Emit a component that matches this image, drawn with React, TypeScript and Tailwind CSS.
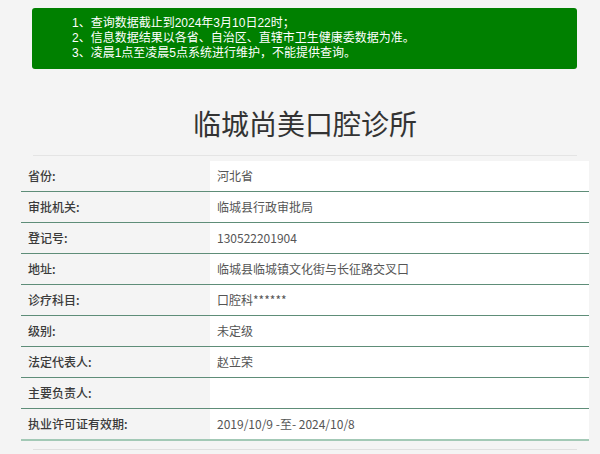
const notices = [
  "1、查询数据截止到2024年3月10日22时；",
  "2、信息数据结果以各省、自治区、直辖市卫生健康委数据为准。",
  "3、凌晨1点至凌晨5点系统进行维护，不能提供查询。",
];

const rows: [string, string][] = [
  ["省份:", "河北省"],
  ["审批机关:", "临城县行政审批局"],
  ["登记号:", "130522201904"],
  ["地址:", "临城县临城镇文化街与长征路交叉口"],
  ["诊疗科目:", "口腔科******"],
  ["级别:", "未定级"],
  ["法定代表人:", "赵立荣"],
  ["主要负责人:", ""],
  ["执业许可证有效期:", "2019/10/9 -至- 2024/10/8"],
];

export default function App() {
  return (
    <div className="h-[454px] overflow-hidden bg-[#f4f4f4] pt-2 font-['Noto_Sans_CJK_SC','Noto_Sans',sans-serif]">
      {/* notice box */}
      <div className="ml-[32px] h-[61px] w-[545px] rounded-[3px] bg-[#008000] pl-[40px] pt-[8px] font-['Liberation_Sans','Noto_Sans_CJK_SC',sans-serif] text-[12px] leading-[15px] text-white">
        {notices.map((n) => (
          <p key={n}>{n}</p>
        ))}
      </div>

      <div className="ml-[33px] mt-[34px] w-[544px] border-b border-[#e4e4e4] pb-[12px] text-center text-[28px] leading-[40px] text-[#333]">
        临城尚美口腔诊所
      </div>

      <div className="ml-[21px] mt-[5px] w-[568px]">
        {rows.map(([label, value], i) => (
          <div
            key={label}
            className={
              i === rows.length - 1
                ? "flex h-[32px] border-b-2 border-[#a3c9b6] text-[12px]"
                : "flex h-[31px] border-b border-[#5e8d78] text-[12px]"
            }
          >
            <div className="flex w-[189px] items-center bg-[#f4f4f4] pl-[7px] font-medium text-[#3a3a3a]">
              {label}
            </div>
            <div className="flex flex-1 items-center bg-white pl-[7px] text-[#555]">
              {value}
            </div>
          </div>
        ))}
      </div>

      <div className="ml-[33px] mt-[8px] w-[544px] border-b border-[#e0e0e0]" />
    </div>
  );
}
